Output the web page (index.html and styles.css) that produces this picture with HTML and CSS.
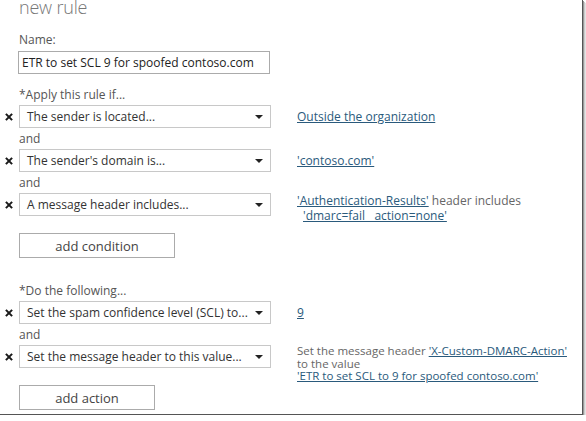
FILE: index.html
```html
<!DOCTYPE html>
<html lang="en">
  <head>
    <meta charset="UTF-8" />
    <title>new rule</title>
    <link rel="stylesheet" href="styles.css">
  </head>
  <body>
    <div class="window">
      <h1 class="title">new rule</h1>
      <form class="rule-form">
        <div class="label">Name:</div>
        <input class="name-input" type="text" value="ETR to set SCL 9 for spoofed contoso.com">

        <div class="label">*Apply this rule if...</div>
        <div class="rule-row">
          <span class="remove"><svg viewBox="0 0 9 9"><path d="M1 1L8 8M8 1L1 8"/></svg></span>
          <div class="select"><span>The sender is located...</span><i class="caret"></i></div>
          <div class="value"><a href="#">Outside the organization</a></div>
        </div>
        <div class="label">and</div>
        <div class="rule-row">
          <span class="remove"><svg viewBox="0 0 9 9"><path d="M1 1L8 8M8 1L1 8"/></svg></span>
          <div class="select"><span>The sender's domain is...</span><i class="caret"></i></div>
          <div class="value"><a href="#">'contoso.com'</a></div>
        </div>
        <div class="label">and</div>
        <div class="rule-row">
          <span class="remove"><svg viewBox="0 0 9 9"><path d="M1 1L8 8M8 1L1 8"/></svg></span>
          <div class="select"><span>A message header includes...</span><i class="caret"></i></div>
          <div class="value top">
            <div><a href="#">'Authentication-Results'</a> header includes</div>
            <div class="indent"><a href="#">'dmarc=fail&nbsp;&nbsp; action=none'</a></div>
          </div>
        </div>
        <button type="button" class="add-button wide">add condition</button>

        <div class="label">*Do the following...</div>
        <div class="rule-row">
          <span class="remove"><svg viewBox="0 0 9 9"><path d="M1 1L8 8M8 1L1 8"/></svg></span>
          <div class="select"><span>Set the spam confidence level (SCL) to...</span><i class="caret"></i></div>
          <div class="value"><a href="#">9</a></div>
        </div>
        <div class="label">and</div>
        <div class="rule-row">
          <span class="remove"><svg viewBox="0 0 9 9"><path d="M1 1L8 8M8 1L1 8"/></svg></span>
          <div class="select"><span>Set the message header to this value...</span><i class="caret"></i></div>
          <div class="value small">
            <div>Set the message header <a href="#">'X-Custom-DMARC-Action'</a></div>
            <div>to the value</div>
            <div><a href="#">'ETR to set SCL to 9 for spoofed contoso.com'</a></div>
          </div>
        </div>
        <button type="button" class="add-button">add action</button>
      </form>
    </div>
  </body>
</html>
```

FILE: styles.css
```css
body {
  margin: 0;
  background: #fff;
  font-family: 'Open Sans', 'Noto Sans', sans-serif;
  font-size: 12px;
  color: #444;
}
.window {
  width: 582px;
  height: 414px;
  border-right: 1px solid #555;
  border-bottom: 1px solid #555;
  box-shadow: 1px 1px 0 #999, 2px 2px 0 #ccc, 3px 3px 1px #e4e4e4;
  overflow: hidden;
  background: #fff;
}
.title {
  margin: -8px 0 0 19px;
  font-size: 18px;
  font-weight: 300;
  letter-spacing: -0.2px;
  color: #777;
  line-height: 30px;
}
.rule-form {
  padding: 0 0 0 19px;
}
.label {
  height: 21px;
  line-height: 21px;
  color: #555;
}
.rule-form .label:first-child {
  margin-top: 7px;
  height: 22px;
}
.name-input {
  box-sizing: border-box;
  display: block;
  width: 252px;
  height: 23px;
  margin: 0 0 10px -1px;
  padding: 0 3px;
  border: 1px solid #ababab;
  font: inherit;
  color: #222;
}
.rule-row {
  display: flex;
  align-items: center;
  margin-left: -19px;
  height: 23px;
}
.remove {
  width: 19px;
  display: flex;
  justify-content: center;
}
.remove svg {
  width: 8px;
  height: 8px;
  margin-left: -1px;
  stroke: #1a1a1a;
  stroke-width: 2.3;
  fill: none;
}
.select {
  box-sizing: border-box;
  flex-shrink: 0;
  width: 252px;
  height: 23px;
  padding: 0 7px;
  border: 1px solid #c8c8c8;
  display: flex;
  align-items: center;
  justify-content: space-between;
  color: #333;
}
.caret {
  width: 0;
  height: 0;
  border-left: 4px solid transparent;
  border-right: 4px solid transparent;
  border-top: 4px solid #222;
}
.value {
  margin-left: 26px;
  white-space: nowrap;
}
.value a {
  color: #2a5a7c;
  text-decoration: underline;
}
.value.top {
  align-self: flex-start;
  line-height: 15px;
  color: #666;
}
.value.top .indent {
  padding-left: 6px;
}
.value.small {
  align-self: flex-start;
  font-size: 11.5px;
  line-height: 12.5px;
  color: #666;
}
.add-button {
  display: block;
  box-sizing: border-box;
  width: 156px;
  height: 25px;
  margin: 17px 0 0 0;
  border: 1px solid #ababab;
  background: #fff;
  font: inherit;
  font-size: 13px;
  color: #444;
}
.add-button.wide + .label {
  margin-top: 22px;
}
.add-button:not(.wide) {
  width: 136px;
}
```
